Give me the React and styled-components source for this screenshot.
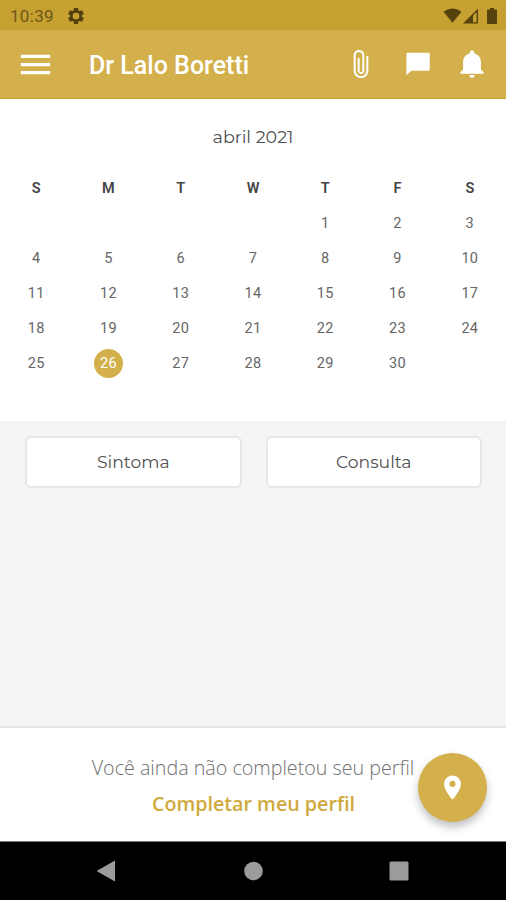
import React from 'react';
import styled, {createGlobalStyle} from "styled-components";
import {IoMdAttach, IoMdNotifications} from "react-icons/io";
import {MdMenu, MdPlace} from "react-icons/md";

const gold = '#d4b04c';

const GlobalStyle = createGlobalStyle`
  * {
    box-sizing: border-box;
  }

  body {
    margin: 0;
    background: #f5f5f5;
  }

  button {
    padding: 0;
    border: none;
    background: none;
    font: inherit;
    color: inherit;
  }
`;

const Screen = styled.div`
  display: flex;
  flex-direction: column;
  width: 506px;
  height: 900px;
  overflow: hidden;
  background: #f5f5f5;
  font-family: Roboto, sans-serif;
`;

const StatusBar = styled.div`
  display: flex;
  align-items: center;
  height: 30px;
  padding: 1px 9px 0 10px;
  background: #c6a131;
  color: #56420d;
`;

const Clock = styled.span`
  width: 57px;
  font-size: 17px;
  line-height: 28px;
  letter-spacing: 0.3px;
  color: #6f5717;
`;

const StatusIcons = styled.div`
  display: flex;
  align-items: center;
  gap: 1px;
  margin-left: auto;

  svg:last-child {
    margin-left: 7px;
  }
`;

const AppBar = styled.header`
  display: flex;
  align-items: center;
  height: 69px;
  padding: 0 8px 0 15px;
  border-bottom: 1px solid #c6a131;
  background: ${gold};
  color: #fff;
`;

const BarButton = styled.button`
  display: flex;
  align-items: center;
  justify-content: center;
  width: ${props => props.$width}px;
  height: 40px;
`;

const Title = styled.h1`
  flex: 1;
  margin: 4px 0 0 34px;
  font-size: 25px;
  font-weight: 500;
  line-height: 30px;
`;

const Calendar = styled.section`
  height: 322px;
  padding-top: 25px;
  background: #fff;
`;

const Month = styled.h2`
  margin: 0 0 22px;
  font-family: Montserrat, Inter, sans-serif;
  font-size: 17.5px;
  font-weight: 400;
  line-height: 25px;
  text-align: center;
  color: #505050;
`;

const Days = styled.div`
  display: grid;
  grid-template-columns: repeat(7, 1fr);
  grid-auto-rows: 35px;
  place-items: center;
`;

const WeekDay = styled.span`
  font-size: 14.5px;
  font-weight: 600;
  color: #444;
`;

const Day = styled.span`
  width: 29px;
  height: 29px;
  border-radius: 50%;
  font-size: 14.5px;
  line-height: 29px;
  letter-spacing: 0.3px;
  text-align: center;
  color: ${props => props.$selected ? '#fff' : '#666'};
  background: ${props => props.$selected ? gold : 'none'};
`;

const Actions = styled.div`
  display: grid;
  grid-template-columns: 1fr 1fr;
  gap: 24px;
  flex: 1;
  align-items: start;
  padding: 15px 24px 0 25px;
`;

const ActionButton = styled.button`
  && {
    height: 52px;
    padding-bottom: 2px;
    border: 2px solid #e7e7e7;
    border-radius: 6px;
    background: #fff;
    font-family: Montserrat, Inter, sans-serif;
    font-size: 17.2px;
    color: #505050;
  }
`;

const Footer = styled.footer`
  position: relative;
  height: 115px;
  padding-top: 26px;
  border-top: 2px solid #e6e6e6;
  background: #fff;
  font-family: "Open Sans", sans-serif;
  text-align: center;
`;

const Notice = styled.p`
  margin: 0;
  font-size: 19.7px;
  font-weight: 300;
  line-height: 28px;
  color: #707070;
`;

const ProfileLink = styled.button`
  && {
    margin: 9px 0 0 1px;
    font-size: 19.7px;
    font-weight: 600;
    line-height: 26px;
    color: #d0a93c;
  }
`;

const LocationButton = styled.button`
  && {
    position: absolute;
    top: 25px;
    right: 19px;
    display: flex;
    align-items: center;
    justify-content: center;
    width: 69px;
    height: 69px;
    border-radius: 50%;
    background: ${gold};
    color: #fff;
    box-shadow: 0 5px 8px rgba(0, 0, 0, 0.25);
  }
`;

const NavBar = styled.nav`
  display: grid;
  grid-template-columns: repeat(3, 146px);
  justify-content: center;
  place-items: center;
  height: 59px;
  border-top: 1px solid #777;
  background: #000;
`;

const weekDays = ['S', 'M', 'T', 'W', 'T', 'F', 'S'];
const firstColumn = 4;
const selectedDay = 26;
const days = Array.from({length: 30}, (_, i) => i + 1);

const GearIcon = () => (
  <svg width="18" height="18" viewBox="-9 -9 18 18" fill="currentColor">
    <circle r="4.7" fill="none" stroke="currentColor" strokeWidth="2.7"/>
    {[0, 60, 120, 180, 240, 300].map(angle => (
      <path key={angle} d="M-2 -8h4l.7 3.3h-5.4z" transform={`rotate(${angle})`}/>
    ))}
  </svg>
);

const WifiIcon = () => (
  <svg width="19" height="15" viewBox="0 0 19 15" fill="currentColor">
    <path d="M.5 3.8Q9.5-2.8 18.5 3.8L9.5 14.8z"/>
  </svg>
);

const SignalIcon = () => (
  <svg width="16" height="16" viewBox="0 0 16 16" fill="currentColor">
    <path fillRule="evenodd" d="M0 15.5L15 .5v15zM10 7.5v6.7h3.6V3.9z"/>
  </svg>
);

const BatteryIcon = () => (
  <svg width="10" height="16" viewBox="0 0 10 16" fill="currentColor">
    <path d="M3 0h4v1.6h2q1 0 1 1V15q0 1-1 1H1q-1 0-1-1V2.6q0-1 1-1h2z"/>
  </svg>
);

const ChatIcon = () => (
  <svg width="24" height="24" viewBox="0 0 24 24" fill="currentColor">
    <path d="M1.5 .8h21q1.200 0 1.200 1.200v15.500q0 1.200-1.200 1.200H5.200L.4 23.200V2q0-1.200 1.100-1.200z"/>
  </svg>
);

const App = () => (
  <>
    <GlobalStyle/>
    <Screen>
      <StatusBar>
        <Clock>10:39</Clock>
        <GearIcon/>
        <StatusIcons>
          <WifiIcon/>
          <SignalIcon/>
          <BatteryIcon/>
        </StatusIcons>
      </StatusBar>

      <AppBar>
        <BarButton $width={40}><MdMenu size={39}/></BarButton>
        <Title>Dr Lalo Boretti</Title>
        <BarButton $width={56}><IoMdAttach size={32}/></BarButton>
        <BarButton $width={57}><ChatIcon/></BarButton>
        <BarButton $width={52}><IoMdNotifications size={34}/></BarButton>
      </AppBar>

      <Calendar>
        <Month>abril 2021</Month>
        <Days>
          {weekDays.map((day, i) => <WeekDay key={i}>{day}</WeekDay>)}
          {days.map(day => (
            <Day
              key={day}
              $selected={day === selectedDay}
              style={day === 1 ? {gridColumnStart: firstColumn + 1} : undefined}
            >
              {day}
            </Day>
          ))}
        </Days>
      </Calendar>

      <Actions>
        <ActionButton>Sintoma</ActionButton>
        <ActionButton>Consulta</ActionButton>
      </Actions>

      <Footer>
        <Notice>Você ainda não completou seu perfil</Notice>
        <ProfileLink>Completar meu perfil</ProfileLink>
        <LocationButton><MdPlace size={29}/></LocationButton>
      </Footer>

      <NavBar>
        <svg width="20" height="22" viewBox="0 0 20 22"><path d="M18 .5v21L-.5 11z" fill="#9b9b9b"/></svg>
        <svg width="20" height="20" viewBox="0 0 20 20"><circle cx="10.5" cy="10" r="9.3" fill="#9b9b9b"/></svg>
        <svg width="20" height="20" viewBox="0 0 20 20"><rect x=".5" y=".5" width="19" height="19" rx="1.5" fill="#9b9b9b"/></svg>
      </NavBar>
    </Screen>
  </>
);

export default App;
